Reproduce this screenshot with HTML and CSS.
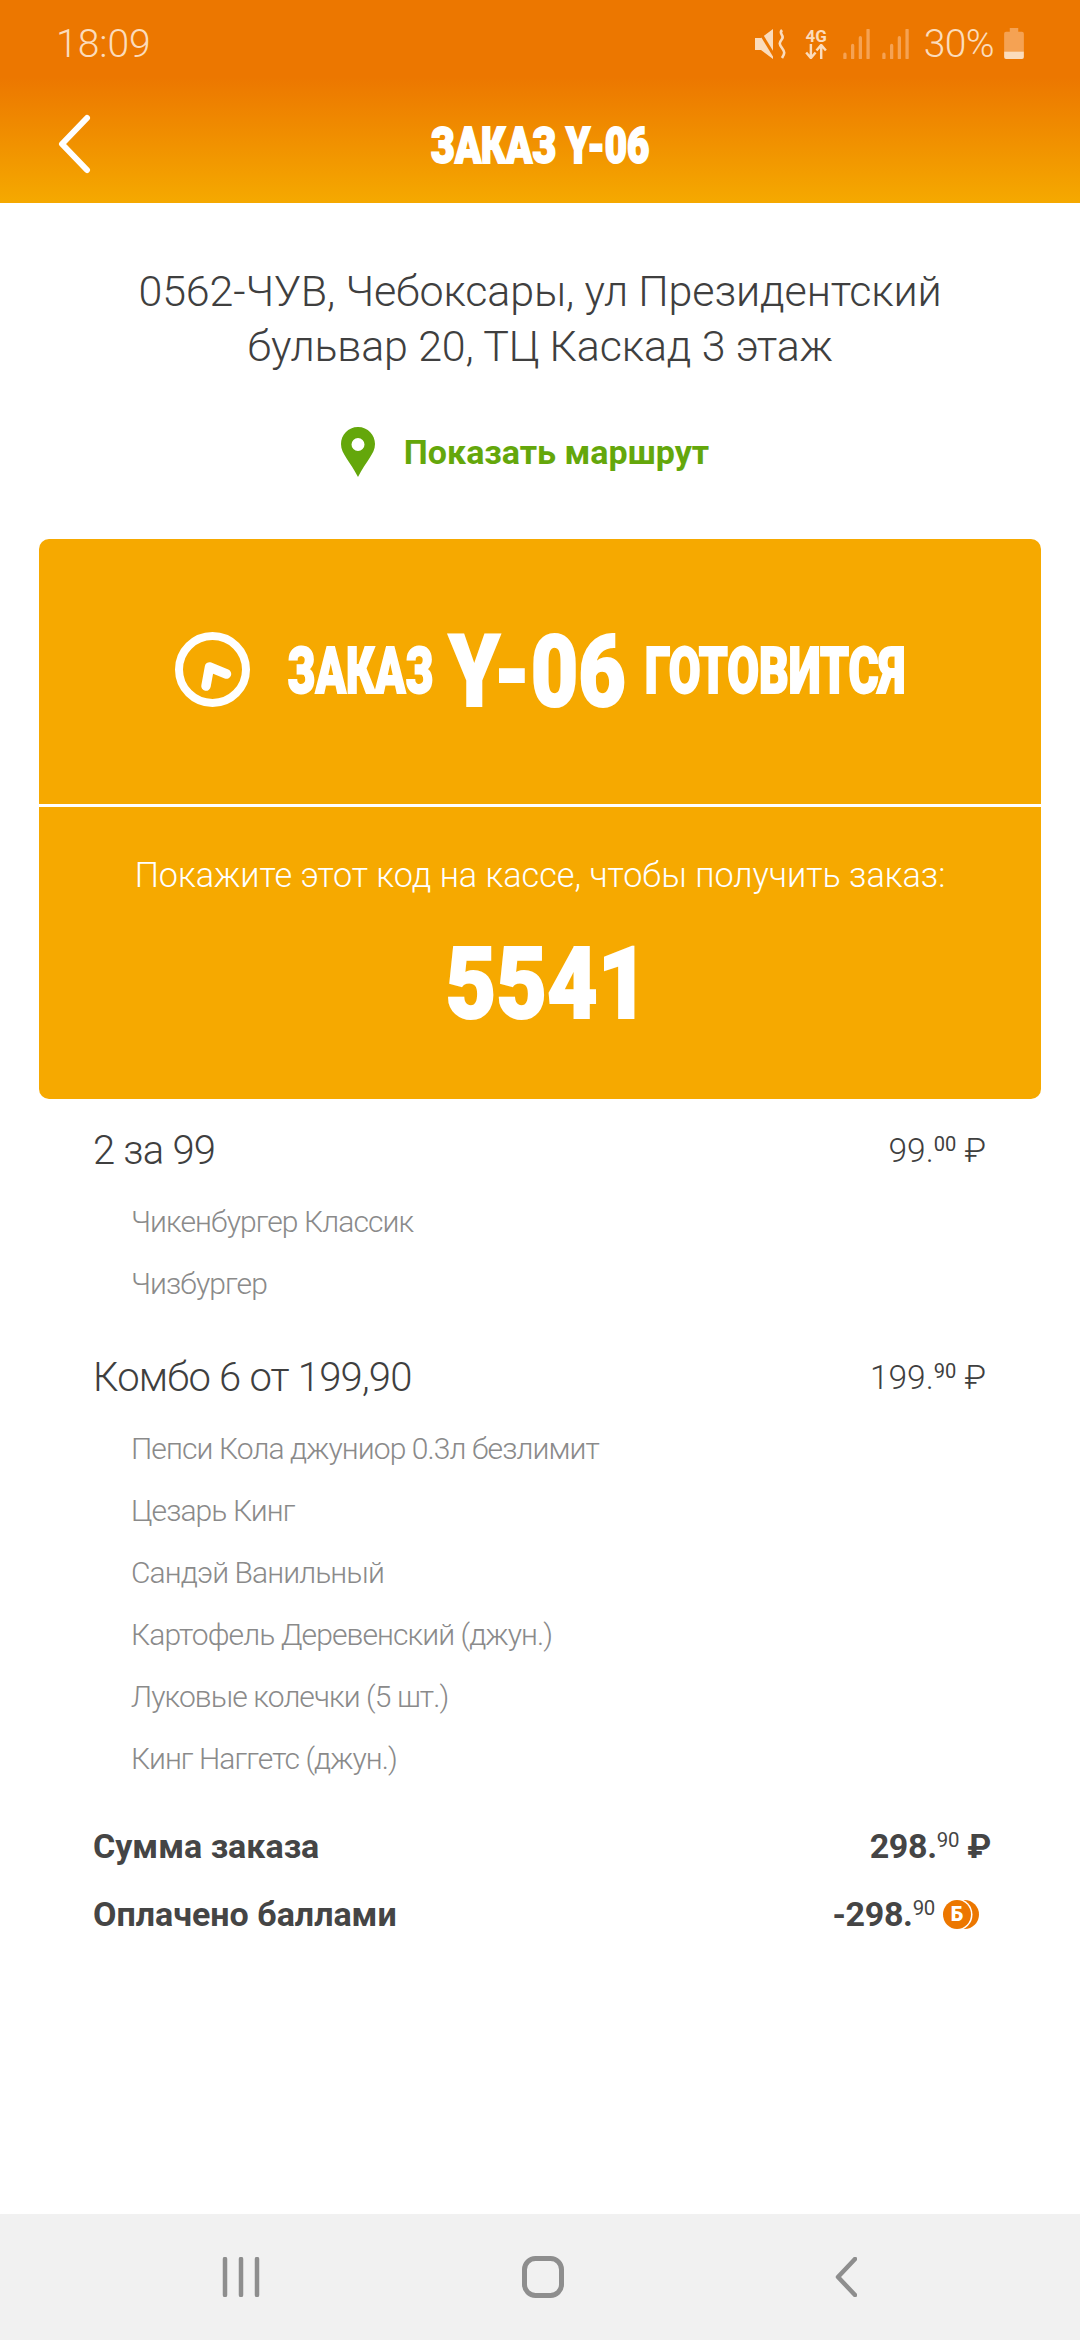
FILE: index.html
```html
<!DOCTYPE html>
<html lang="ru">
<head>
<meta charset="utf-8">
<title>Заказ Y-06</title>
<link rel="stylesheet" href="styles.css">
</head>
<body>
<div class="page">
  <header class="header">
    <div class="status">
      <span class="time">18:09</span>
      <div class="status-right">
        <svg class="ic-mute" width="32" height="30" viewBox="0 0 32 30"><path d="M0 9h6L18 0v30L6 21H0z" fill="#fbdcbc"/><path d="M3 0l17 28" stroke="#ec7700" stroke-width="3"/><path d="M27 1c-4 4 3 5 0 9s-3 5 0 9 3 5 0 10" fill="none" stroke="#fbdcbc" stroke-width="2.6"/></svg>
        <div class="net"><span class="net-label">4G</span>
          <svg width="23" height="15" viewBox="0 0 24 16"><path d="M6 0v14M1 9l5 6 5-6M17 16V2M12 7l5-6 5 6" fill="none" stroke="#fbdcbc" stroke-width="2.6"/></svg>
        </div>
        <svg width="27" height="30" viewBox="0 0 28 31" class="sig"><path d="M2 26v4M10 17v13M18 9v21M26 1v29" stroke="#f5a253" stroke-width="3.4" stroke-linecap="round"/></svg>
        <svg width="27" height="30" viewBox="0 0 28 31" class="sig"><path d="M2 26v4M10 17v13M18 9v21M26 1v29" stroke="#f5a253" stroke-width="3.4" stroke-linecap="round"/></svg>
        <span class="batt-text">30%</span>
        <svg class="batt" width="22" height="31" viewBox="0 0 21 33"><path d="M6 0h9v4h4a2 2 0 0 1 2 2v19H0V6a2 2 0 0 1 2-2h4z" fill="#f5a253"/><path d="M0 25h21v6a2 2 0 0 1-2 2H2a2 2 0 0 1-2-2z" fill="#fbdcbc"/></svg>
      </div>
    </div>
    <div class="titlebar">
      <svg class="back" width="36" height="60" viewBox="0 0 36 60"><path d="M31 4L6 30l25 26" fill="none" stroke="#fff" stroke-width="6" stroke-linecap="round" stroke-linejoin="round"/></svg>
      <h1 class="title"><span class="squeeze sq-title">ЗАКАЗ Y-06</span></h1>
    </div>
  </header>

  <main class="main">
    <p class="address">0562-ЧУВ, Чебоксары, ул Президентский<br>бульвар 20, ТЦ Каскад 3 этаж</p>
    <div class="route">
      <svg width="34" height="50" viewBox="0 0 34 50"><path fill-rule="evenodd" d="M17 0C7 0 0 8 0 17c0 10 9 17 17 33 8-16 17-23 17-33C34 8 27 0 17 0zm0 11a6.500 6.500 0 1 1 0 13 6.500 6.500 0 0 1 0-13z" fill="#64a70b"/></svg>
      <span class="route-text">Показать маршрут</span>
    </div>

    <section class="card">
      <div class="card-top">
        <svg class="clock" width="75" height="75" viewBox="0 0 75 75"><circle cx="37.500" cy="37.500" r="33.500" fill="none" stroke="#fff" stroke-width="8"/><path d="M31 54l3.500-19 17 7" fill="none" stroke="#fff" stroke-width="9.500" stroke-linecap="round" stroke-linejoin="round"/></svg>
        <div class="headline">
          <span class="hl hl-a"><span class="squeeze sq-a">ЗАКАЗ</span></span>
          <span class="hl hl-b"><span class="squeeze sq-b">Y-06</span></span>
          <span class="hl hl-c"><span class="squeeze sq-c">ГОТОВИТСЯ</span></span>
        </div>
      </div>
      <div class="card-bottom">
        <p class="hint">Покажите этот код на кассе, чтобы получить заказ:</p>
        <div class="code"><span class="squeeze sq-code">5541</span></div>
      </div>
    </section>

    <section class="items">
      <div class="item">
        <div class="item-row"><span class="item-name">2 за 99</span><span class="price">99.<sup>00</sup> ₽</span></div>
        <div class="sub">Чикенбургер Классик</div>
        <div class="sub">Чизбургер</div>
      </div>
      <div class="item">
        <div class="item-row"><span class="item-name">Комбо 6 от 199,90</span><span class="price">199.<sup>90</sup> ₽</span></div>
        <div class="sub">Пепси Кола джуниор 0.3л безлимит</div>
        <div class="sub">Цезарь Кинг</div>
        <div class="sub">Сандэй Ванильный</div>
        <div class="sub">Картофель Деревенский (джун.)</div>
        <div class="sub">Луковые колечки (5 шт.)</div>
        <div class="sub">Кинг Наггетс (джун.)</div>
      </div>
    </section>

    <section class="totals">
      <div class="total-row"><span>Сумма заказа</span><span class="total-val">298.<sup>90</sup> ₽</span></div>
      <div class="total-row"><span>Оплачено баллами</span><div class="pts"><span class="total-val">-298.<sup>90</sup></span>
        <span class="coin"><span class="coin-back"></span><span class="coin-front">Б</span></span></div></div>
    </section>
  </main>

  <nav class="navbar">
    <svg width="38" height="40" viewBox="0 0 38 40"><path d="M3 2v36M19 2v36M35 2v36" stroke="#8e8e8e" stroke-width="4.500" stroke-linecap="round"/></svg>
    <svg width="42" height="42" viewBox="0 0 42 42"><rect x="2.500" y="2.500" width="37" height="37" rx="11" fill="none" stroke="#8e8e8e" stroke-width="5"/></svg>
    <svg width="22" height="40" viewBox="0 0 22 40"><path d="M20 2L3 20l17 18" fill="none" stroke="#8e8e8e" stroke-width="4.500" stroke-linecap="round" stroke-linejoin="round"/></svg>
  </nav>
</div>
</body>
</html>
```

FILE: styles.css
```css
* { box-sizing: border-box; }
html, body { margin: 0; padding: 0; }
body { font-family: Roboto, "Noto Sans", sans-serif; background: #fff; }
.page { width: 1080px; height: 2340px; display: flex; flex-direction: column; overflow: hidden; }

.header { height: 203px; background: linear-gradient(180deg, #ec7700 0%, #ec7700 38%, #f5a900 100%); display: flex; flex-direction: column; }
.status { height: 88px; padding: 0 55px 0 56px; display: flex; align-items: center; justify-content: space-between; }
.time { font-size: 39px; font-weight: 300; color: #fbdcbc; }
.status-right { display: flex; align-items: center; gap: 12px; }
.ic-mute { margin-right: 6px; }
.net { display: flex; flex-direction: column; align-items: center; margin-right: 3px; }
.net-label { font-size: 17px; font-weight: 700; line-height: 15px; color: #fbdcbc; }
.batt-text { font-size: 39px; font-weight: 300; letter-spacing: -0.6px; color: #fbdcbc; margin-left: 3px; margin-right: -3px; }
.batt { margin-top: -2px; }

.titlebar { flex: 1; position: relative; display: flex; align-items: center; justify-content: center; }
.back { position: absolute; left: 56px; top: 26px; }
.title { margin: 0; font-size: 50px; line-height: 50px; font-weight: 900; color: #fff; }
.squeeze { display: inline-block; -webkit-text-stroke: 2px #fff; white-space: nowrap; }
.sq-title { transform: scaleX(0.77); }
.sq-a { transform: scaleX(0.70); }
.sq-b { transform: scaleX(0.82); }
.sq-c { transform: scaleX(0.72); }
.sq-code { transform: scaleX(0.875); }

.main { flex: 1; display: flex; flex-direction: column; }
.address { margin: 61px 0 0; text-align: center; font-size: 43px; line-height: 55px; font-weight: 300; letter-spacing: -0.15px; color: #3f3f3f; }
.route { margin-top: 53px; height: 50px; display: flex; align-items: center; justify-content: center; gap: 29px; padding-right: 30px; }
.route-text { font-size: 34px; font-weight: 700; color: #64a70b; }

.card { margin: 62px 39px 0; height: 560px; background: #f6a900; border-radius: 10px; color: #fff; display: flex; flex-direction: column; }
.card-top { height: 268px; border-bottom: 3px solid #fff; display: flex; align-items: center; gap: 38px; padding-left: 136px; }
.clock { margin-top: -4px; }
.headline { display: flex; align-items: center; }
.hl { display: flex; justify-content: center; font-weight: 900; line-height: 1; }
.hl-a { width: 145px; font-size: 64px; }
.hl-b { width: 176px; margin: 0 20px 0 16px; font-size: 100px; }
.hl-c { width: 260px; font-size: 64px; }
.card-bottom { flex: 1; display: flex; flex-direction: column; align-items: center; }
.hint { margin: 44px 0 0; font-size: 34.200px; line-height: 48px; font-weight: 300; color: #fff; }
.code { margin: 30px 0 0 13px; font-size: 100px; line-height: 110px; font-weight: 900; }

.items { padding: 25px 94px 0 93px; display: flex; flex-direction: column; gap: 37px; }
.item-row { display: flex; justify-content: space-between; align-items: center; height: 52px; }
.item-name { font-size: 40px; font-weight: 300; letter-spacing: -0.8px; color: #3f3f3f; }
.price { font-size: 33.500px; font-weight: 300; color: #3f3f3f; }
.price sup, .total-val sup { font-size: 0.6em; line-height: 0; vertical-align: 0.55em; font-weight: 400; }
.sub { margin-left: 38px; height: 62px; display: flex; align-items: center; font-size: 30px; font-weight: 300; letter-spacing: -0.9px; color: #8a8a8a; }
.item-row + .sub { margin-top: 14px; }

.totals { padding: 31px 89px 0 93px; display: flex; flex-direction: column; gap: 16px; }
.total-row { height: 52px; display: flex; justify-content: space-between; align-items: center; font-size: 34px; font-weight: 700; color: #454545; }
.total-val { letter-spacing: -0.3px; }
.pts { display: flex; align-items: center; gap: 8px; padding-right: 12px; }
.coin { position: relative; width: 36px; height: 29px; display: block; }
.coin-back { position: absolute; left: 7px; top: 0; width: 29px; height: 29px; border-radius: 50%; background: #ec7700; }
.coin-front { position: absolute; left: 0; top: 0; width: 28px; height: 29px; border-radius: 50%; background: #ec7700; color: #fff; font-size: 20px; font-weight: 900; line-height: 29px; text-align: center; box-shadow: 0 0 0 1.500px #fff; }

.navbar { height: 126px; background: #f1f1f1; display: flex; align-items: center; padding-left: 222px; gap: 262px; }
.navbar svg:last-child { margin-left: 9px; }
```
